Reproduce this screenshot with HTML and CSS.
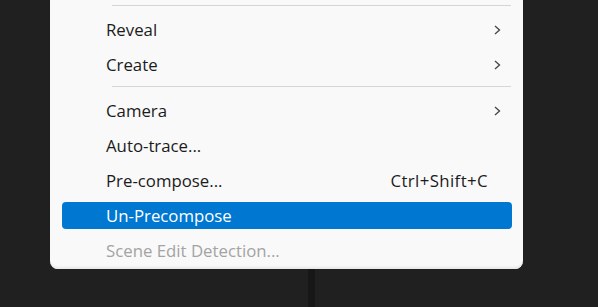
FILE: index.html
```html
<!DOCTYPE html>
<html>
<head>
<meta charset="utf-8">
<link rel="stylesheet" href="styles.css">
</head>
<body>
<div class="menu">
  <div class="sep"></div>
  <div class="item"><span class="label">Reveal</span><svg class="chev" width="7" height="10" viewBox="0 0 7 10"><polyline points="1,1 5.5,5 1,9" fill="none" stroke="#444" stroke-width="1.3"/></svg></div>
  <div class="item"><span class="label">Create</span><svg class="chev" width="7" height="10" viewBox="0 0 7 10"><polyline points="1,1 5.5,5 1,9" fill="none" stroke="#444" stroke-width="1.3"/></svg></div>
  <div class="sep"></div>
  <div class="item"><span class="label">Camera</span><svg class="chev" width="7" height="10" viewBox="0 0 7 10"><polyline points="1,1 5.5,5 1,9" fill="none" stroke="#444" stroke-width="1.3"/></svg></div>
  <div class="item"><span class="label">Auto-trace...</span></div>
  <div class="item"><span class="label">Pre-compose...</span><span class="shortcut">Ctrl+Shift+C</span></div>
  <div class="item active"><span class="label">Un-Precompose</span></div>
  <div class="item disabled"><span class="label">Scene Edit Detection...</span></div>
</div>
<div class="rail"></div>
</body>
</html>
```
FILE: styles.css
```css
html, body {
  margin: 0;
  padding: 0;
  background: #202020;
  width: 598px;
  height: 307px;
  overflow: hidden;
}
body {
  font-family: "Open Sans", "Noto Sans", sans-serif;
}
.menu {
  margin-left: 50px;
  width: 473px;
  background: #f9f9f9;
  border-radius: 0 0 8px 8px;
  box-shadow: inset 0 -3px 2px -1px #e9e9e9;
  display: flex;
  flex-direction: column;
  padding: 1px 0 1px;
}
.sep {
  height: 1px;
  background: #d5d5d5;
  margin: 4px 12px 6px 62px;
}
.item {
  height: 27px;
  margin: 4px 11px 4px 12px;
  border-radius: 4px;
  display: flex;
  align-items: center;
  padding: 0 11px 0 44px;
  font-size: 16.8px;
  color: #1b1b1b;
}
.label {
  flex: 1;
}
.shortcut {
  margin-right: 13px;
  letter-spacing: 0.4px;
}
.chev {
  display: block;
}
.item.active {
  background: #0077d1;
  color: #ffffff;
}
.item.disabled {
  color: #a3a3a3;
}
.rail {
  margin-left: 308px;
  width: 7px;
  height: 40px;
  background: #171717;
}
```
